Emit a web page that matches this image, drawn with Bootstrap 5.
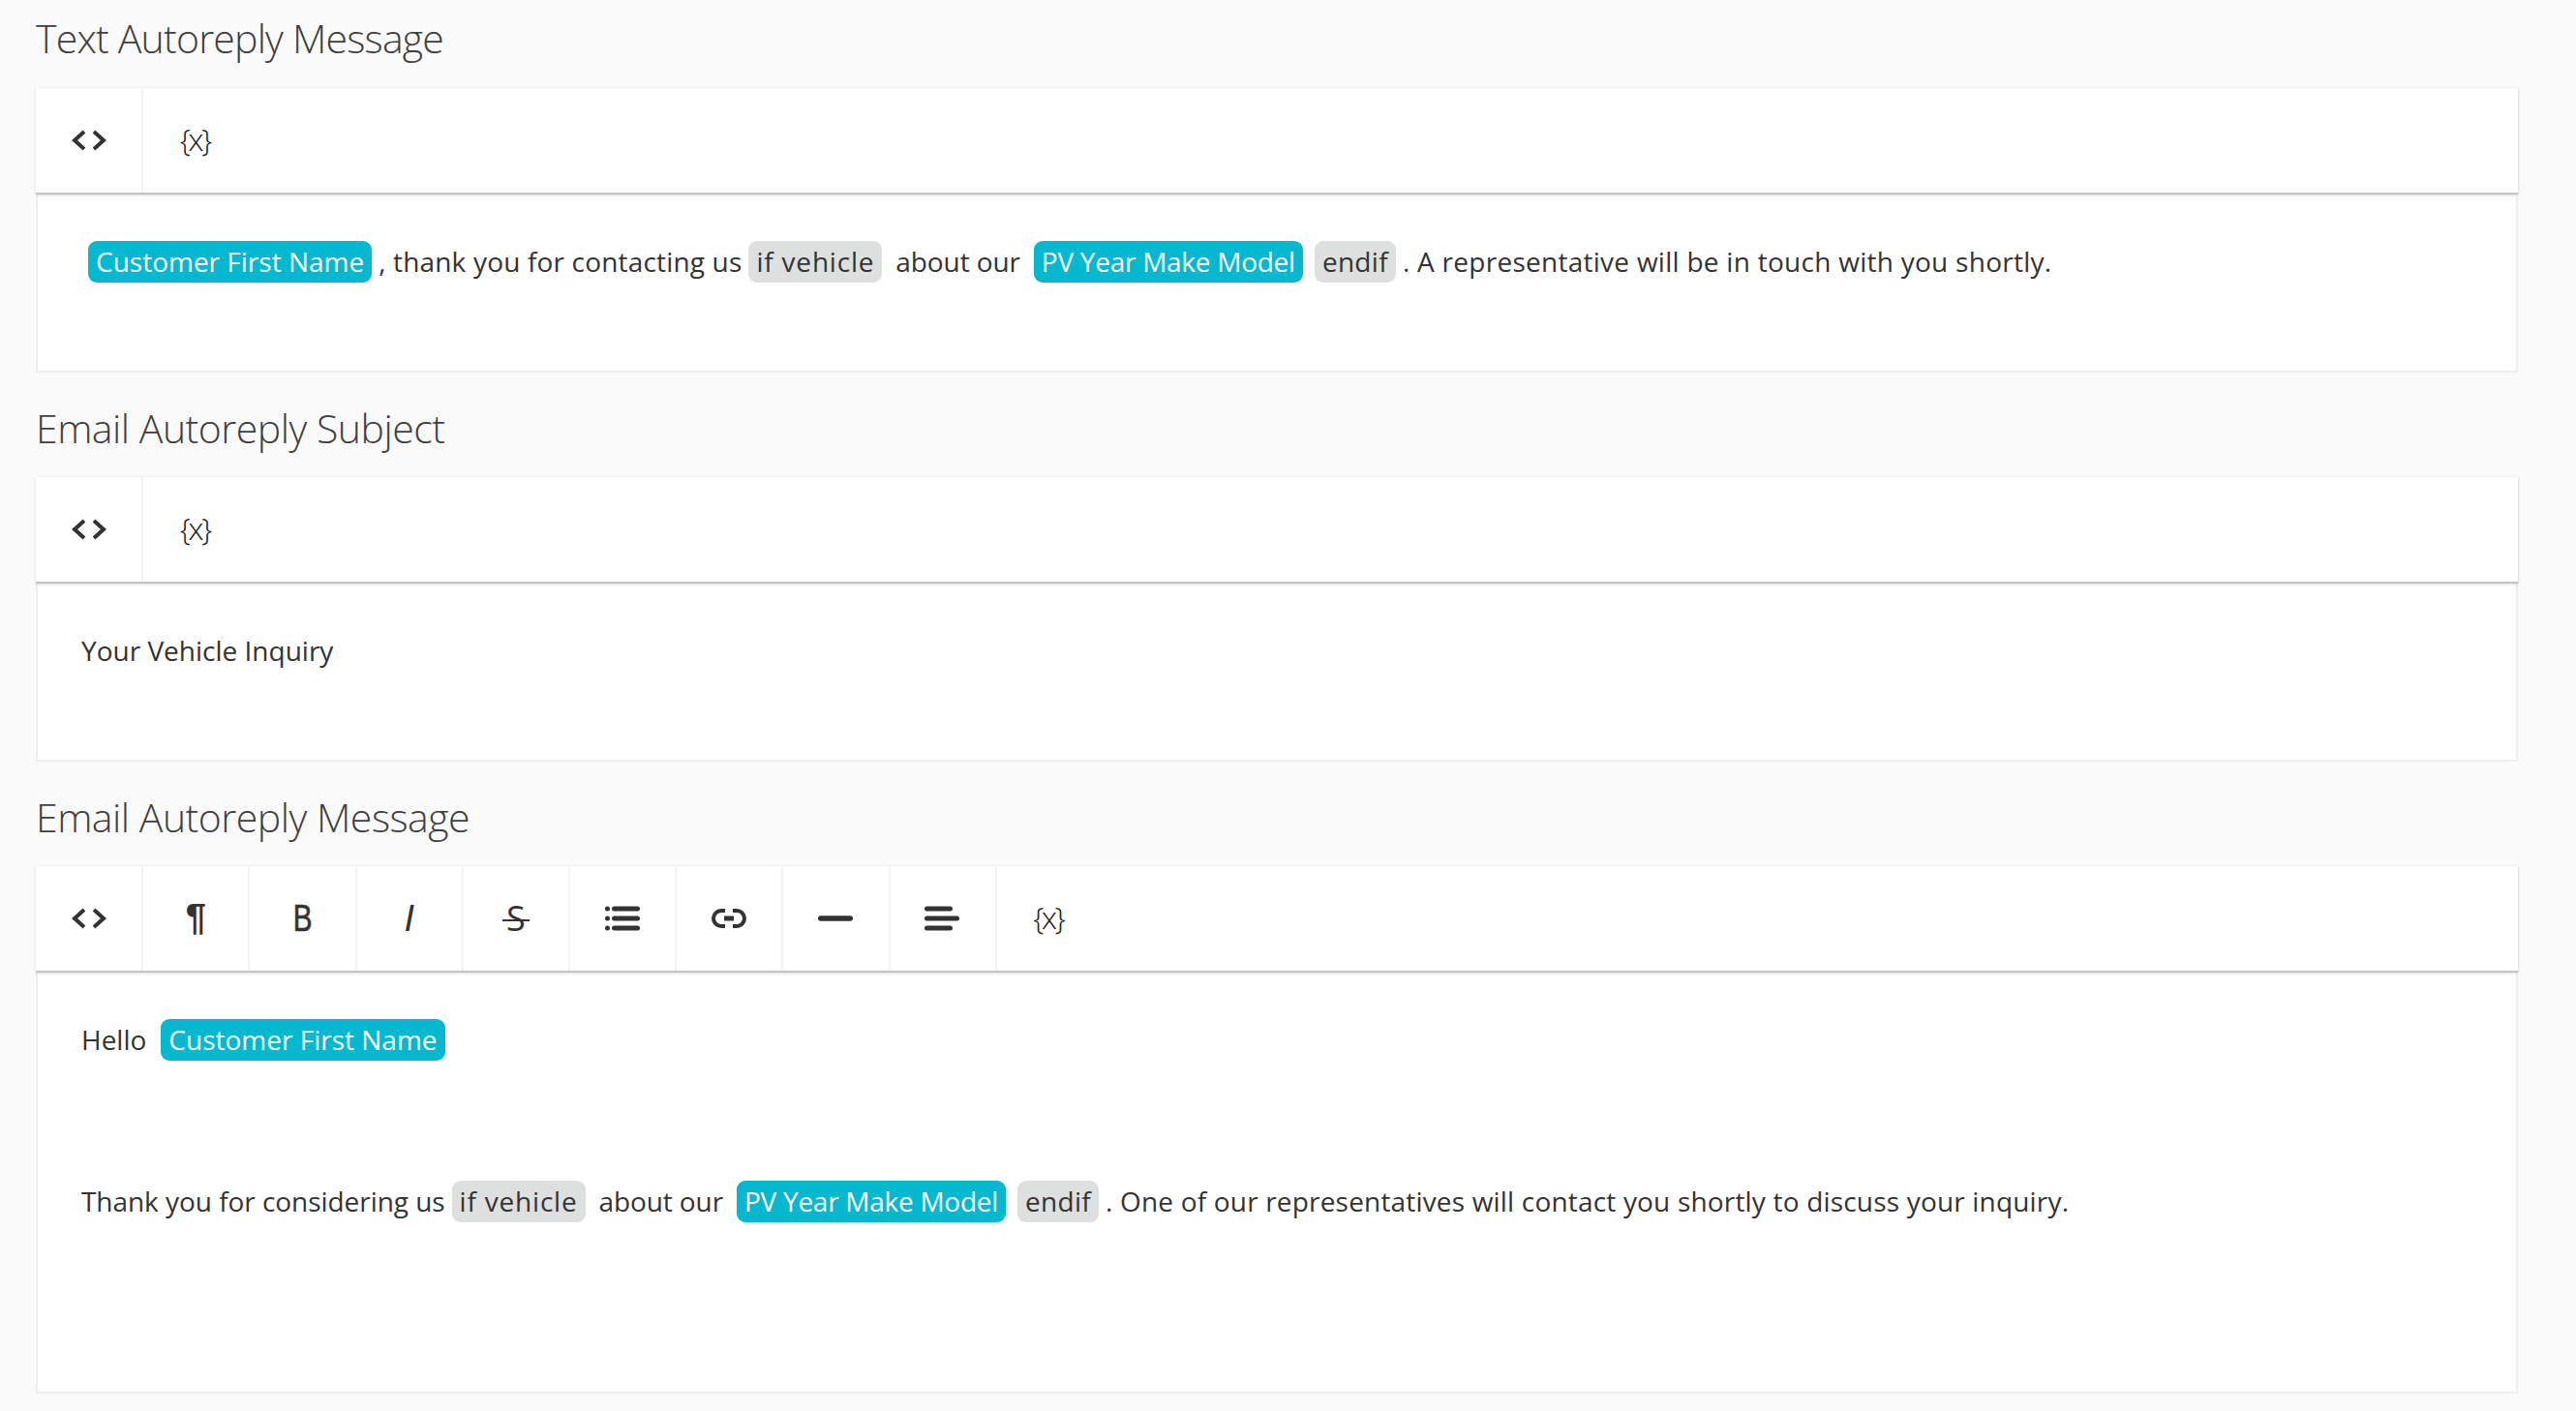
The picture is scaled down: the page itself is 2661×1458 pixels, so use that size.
<!DOCTYPE html>
<html lang="en">
<head>
<meta charset="utf-8">
<title>Autoreply</title>
<link href="https://cdn.jsdelivr.net/npm/bootstrap@5.3.0/dist/css/bootstrap.min.css" rel="stylesheet">
<style>
html,body{background:#fafafa;}
body{font-family:"Open Sans","Liberation Sans",sans-serif;color:#333;overflow:hidden;}
.page-wrap{padding:0 60px 0 37px;}
.sec-title{font-family:"Open Sans","Noto Sans",sans-serif;font-weight:300;font-size:41px;line-height:54px;height:108px;padding-top:30px;margin:0;color:#3f3f3f;letter-spacing:-.5px;}
.sec-first{height:91px;padding-top:12px;letter-spacing:-.8px;}
.ed-toolbar{background:#fff;height:110px;padding-left:1px;border-bottom:2px solid #c4c4c4;box-shadow:0 1px 3px rgba(0,0,0,.12),1px 0 2px rgba(0,0,0,.06);position:relative;z-index:1;}
.tb-btn{width:110.2px;height:108px;border-right:2px solid #f3f3f3;color:#333;line-height:1;}
.tb-btn svg{display:block;margin-left:-1px;}
.tb-var{font-size:32px;font-weight:300;color:#222;letter-spacing:-2.5px;padding:0 4px 3px 0;}
.tb-last{border-right:0;}
.tb-pil{font-family:"Liberation Sans",sans-serif;font-size:38px;font-weight:700;padding-bottom:2px;}
.tb-b{font-family:"Liberation Sans",sans-serif;font-size:38px;font-weight:400;-webkit-text-stroke:.7px #333;}
.tb-b span{display:inline-block;transform:scaleX(.78);}
.tb-i{font-family:"Liberation Sans",sans-serif;font-size:38px;font-style:italic;font-weight:400;}
.tb-s{font-family:"Open Sans",sans-serif;font-size:36px;font-weight:400;}
.tb-s span{display:inline-block;position:relative;}
.tb-s span::after{content:"";position:absolute;left:-4px;right:-4px;top:52%;height:2px;background:#333;}
.ed-body{background:#fff;border:2px solid #eee;border-top:0;padding:48px 45px 0;font-size:28px;line-height:43px;white-space:nowrap;}
.h-a{height:184px;}
.h-c{height:435px;padding-top:48px;}
.tline{height:43px;display:flex;align-items:center;}
.tline+.tline{margin-top:124px;}
.chip{display:inline-block;height:43px;line-height:43px;padding:0 8px;border-radius:9px;margin:0 7px;}
.chip-v{background:#03b8cf;color:#fff;}
.chip-g{background:#dee0e0;color:#333;}
.t{display:inline-block;}
.t-mid{margin:0 7px 0 7px;letter-spacing:-.1px;}
.t-thank{letter-spacing:.17px;}
.t-considering{letter-spacing:-.05px;}
.t-long{letter-spacing:.27px;}
.t-long2{letter-spacing:.18px;}
.ls-if{letter-spacing:.8px;}
.ls-pv{letter-spacing:-.27px;}
.chip-tail{margin-left:5px;letter-spacing:.3px;}
.chip-hello{margin-left:15px;}
</style>
</head>
<body>
<div class="page-wrap">
 <h2 class="sec-title sec-first">Text Autoreply Message</h2>
 <div class="ed-toolbar d-flex">
  <div class="tb-btn d-flex align-items-center justify-content-center"><svg width="36" height="24" viewBox="0 0 36 24" fill="none" stroke="#333" stroke-width="4"><path d="M13 3 3 12l10 9M23 3l10 9-10 9"/></svg></div>
  <div class="tb-btn tb-var tb-last d-flex align-items-center justify-content-center">{x}</div>
 </div>
 <div class="ed-body h-a"><div class="tline"><span class="chip chip-v">Customer First Name</span><span class="t t-thank">, thank you for contacting us</span><span class="chip chip-g ls-if">if vehicle</span><span class="t t-mid">about our</span><span class="chip chip-v ls-pv">PV Year Make Model</span><span class="chip chip-g chip-tail">endif</span><span class="t t-long">. A representative will be in touch with you shortly.</span></div></div>

 <h2 class="sec-title">Email Autoreply Subject</h2>
 <div class="ed-toolbar d-flex">
  <div class="tb-btn d-flex align-items-center justify-content-center"><svg width="36" height="24" viewBox="0 0 36 24" fill="none" stroke="#333" stroke-width="4"><path d="M13 3 3 12l10 9M23 3l10 9-10 9"/></svg></div>
  <div class="tb-btn tb-var tb-last d-flex align-items-center justify-content-center">{x}</div>
 </div>
 <div class="ed-body h-a"><div class="tline"><span class="t">Your Vehicle Inquiry</span></div></div>

 <h2 class="sec-title">Email Autoreply Message</h2>
 <div class="ed-toolbar d-flex">
  <div class="tb-btn d-flex align-items-center justify-content-center"><svg width="36" height="24" viewBox="0 0 36 24" fill="none" stroke="#333" stroke-width="4"><path d="M13 3 3 12l10 9M23 3l10 9-10 9"/></svg></div>
  <div class="tb-btn tb-pil d-flex align-items-center justify-content-center">¶</div>
  <div class="tb-btn tb-b d-flex align-items-center justify-content-center"><span>B</span></div>
  <div class="tb-btn tb-i d-flex align-items-center justify-content-center">I</div>
  <div class="tb-btn tb-s d-flex align-items-center justify-content-center"><span>S</span></div>
  <div class="tb-btn d-flex align-items-center justify-content-center"><svg width="36" height="26" viewBox="0 0 36 26" fill="#333"><circle cx="2.5" cy="3" r="2.5"/><circle cx="2.5" cy="13" r="2.5"/><circle cx="2.5" cy="23" r="2.5"/><rect x="7" y="0.5" width="29" height="5" rx="2.5"/><rect x="7" y="10.5" width="29" height="5" rx="2.5"/><rect x="7" y="20.5" width="29" height="5" rx="2.5"/></svg></div>
  <div class="tb-btn d-flex align-items-center justify-content-center"><svg width="36" height="20" viewBox="0 0 36 20" fill="none" stroke="#333" stroke-width="4"><path d="M14 2H10a8 8 0 0 0 0 16h4M22 2h4a8 8 0 0 1 0 16h-4"/><path d="M13 10h10" stroke-width="5"/></svg></div>
  <div class="tb-btn d-flex align-items-center justify-content-center"><svg width="36" height="6" viewBox="0 0 36 6"><rect width="36" height="5.4" y=".3" rx="2.7" fill="#333"/></svg></div>
  <div class="tb-btn d-flex align-items-center justify-content-center"><svg width="36" height="26" viewBox="0 0 36 26" fill="#333"><rect y="0.5" width="29" height="5" rx="2.5"/><rect y="10.5" width="36" height="5" rx="2.5"/><rect y="20.5" width="29" height="5" rx="2.5"/></svg></div>
  <div class="tb-btn tb-var tb-last d-flex align-items-center justify-content-center">{x}</div>
 </div>
 <div class="ed-body h-c">
  <div class="tline"><span class="t">Hello</span><span class="chip chip-v chip-hello">Customer First Name</span></div>
  <div class="tline"><span class="t t-considering">Thank you for considering us</span><span class="chip chip-g ls-if">if vehicle</span><span class="t t-mid">about our</span><span class="chip chip-v ls-pv">PV Year Make Model</span><span class="chip chip-g chip-tail">endif</span><span class="t t-long2">. One of our representatives will contact you shortly to discuss your inquiry.</span></div>
 </div>
</div>
<script src="https://cdn.jsdelivr.net/npm/bootstrap@5.3.0/dist/js/bootstrap.bundle.min.js"></script>
</body>
</html>
